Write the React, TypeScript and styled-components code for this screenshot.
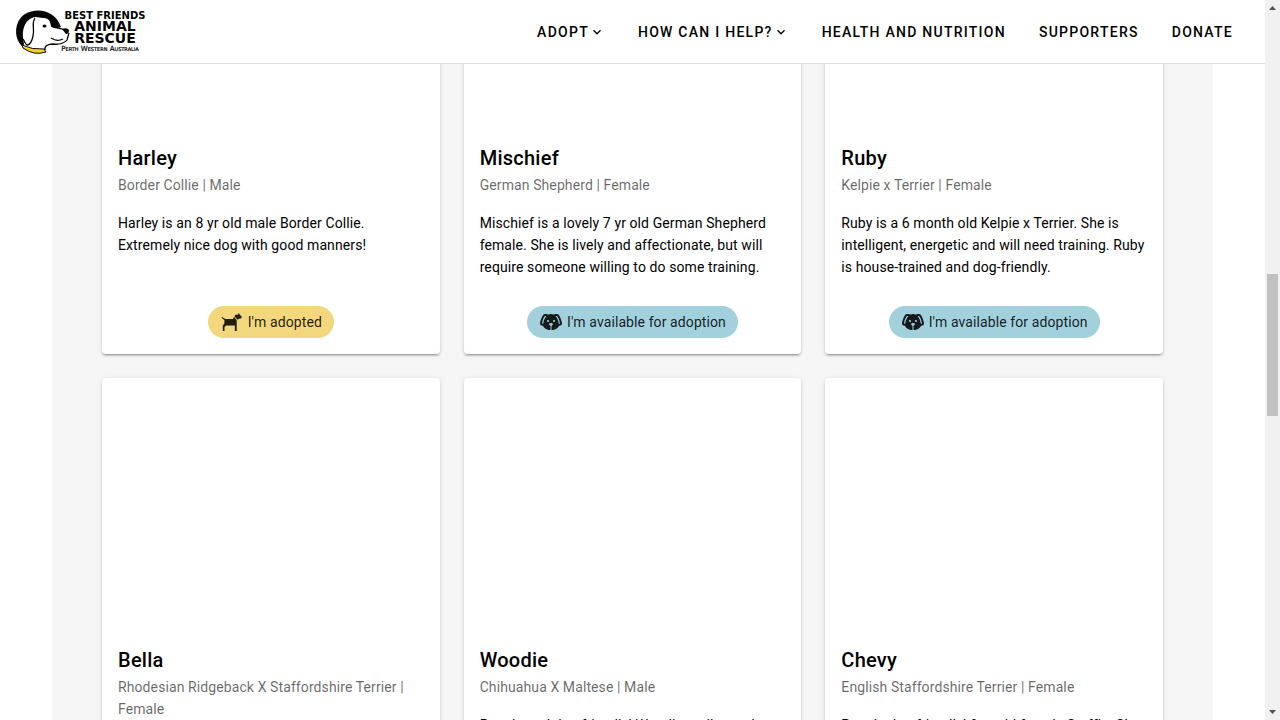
import React from "react";
import styled, { createGlobalStyle } from "styled-components";

const GlobalStyle = createGlobalStyle`
  *, *::before, *::after { box-sizing: border-box; }
  body { margin: 0; background: #fff; color: #000; font-family: Roboto, sans-serif; font-size: 14px; line-height: 22px; overflow: hidden; }
  h2, p { margin: 0; }
`;

const Shell = styled.div`
  display: flex;
  height: 100vh;
`;

const Site = styled.div`
  flex: 1;
  min-width: 0;
  display: flex;
  flex-direction: column;
`;

const Header = styled.header`
  flex: none;
  display: flex;
  align-items: center;
  justify-content: space-between;
  height: 64px;
  padding: 0 16px;
  border-bottom: 1px solid #e0e0e0;
  background: #fff;
`;

const LogoLink = styled.a`
  display: block;
  height: 46px;
  color: #000;
`;

const Nav = styled.nav`
  display: flex;
  gap: 1px;
`;

const navItem = `
  display: inline-flex;
  align-items: center;
  height: 36px;
  padding: 0 16px;
  border: 0;
  background: none;
  color: #000;
  font: 500 14px Roboto, sans-serif;
  letter-spacing: 0.09em;
  text-transform: uppercase;
  text-decoration: none;
  white-space: nowrap;
`;
const NavLink = styled.a`${navItem}`;
const NavButton = styled.button`${navItem}`;

const Main = styled.main`
  flex: 1;
  min-height: 0;
  overflow: hidden;
  padding: 0 52px;
`;

const Panel = styled.section`
  max-width: 1161px;
  margin: -188px auto 0;
  padding: 0 50px;
  background: #f6f6f6;
`;

const Grid = styled.div`
  display: grid;
  grid-template-columns: repeat(3, minmax(0, 1fr));
  gap: 24px;
`;

const Card = styled.article`
  display: flex;
  flex-direction: column;
  min-height: 478px;
  border-radius: 4px;
  background: #fff;
  letter-spacing: 0.007em;
  box-shadow: 0 3px 1px -2px rgba(0, 0, 0, 0.2), 0 2px 2px 0 rgba(0, 0, 0, 0.14), 0 1px 5px 0 rgba(0, 0, 0, 0.12);
`;

const Photo = styled.div`
  height: 250px;
`;

const Name = styled.h2`
  padding: 16px 16px 0;
  font-size: 20px;
  font-weight: 500;
  line-height: 32px;
  letter-spacing: 0.0125em;
`;

const Breed = styled.p`
  padding: 0 16px 16px;
  color: rgba(0, 0, 0, 0.6);
`;

const About = styled.p`
  flex: 1;
  padding: 0 16px 16px;
`;

const Actions = styled.div`
  display: flex;
  justify-content: center;
  padding: 0 16px 16px;
`;

const Chip = styled.span<{ $adopted: boolean }>`
  display: inline-flex;
  align-items: center;
  gap: 4px;
  height: 32px;
  padding: 0 12px;
  border-radius: 16px;
  background: ${(p) => (p.$adopted ? "#f2d77c" : "#a2d0dd")};
  color: rgba(0, 0, 0, 0.87);
  white-space: nowrap;
`;

const Scrollbar = styled.div`
  flex: none;
  display: flex;
  flex-direction: column;
  align-items: center;
  width: 15px;
  background: #f1f1f1;
`;
const Arrow = styled.svg`
  flex: none;
  width: 15px;
  height: 15px;
  fill: #505050;
`;
const Track = styled.div`
  flex: 1;
  width: 11px;
  padding-top: 259px;
`;
const Thumb = styled.div`
  height: 142px;
  background: #c1c1c1;
`;

const DogFace = () => (
  <svg width="24" height="24" viewBox="0 0 24 24" fill="currentColor" aria-hidden="true">
    <path d="M18,4C16.29,4 15.25,4.33 14.65,4.61C13.88,4.23 13,4 12,4C11,4 10.12,4.23 9.35,4.61C8.75,4.33 7.71,4 6,4C3,4 1,12 1,14C1,14.83 2.32,15.59 4.14,15.9C4.78,18.14 7.8,19.85 11.5,20V15.72C10.91,15.35 10,14.68 10,14C10,13 12,13 12,13C12,13 14,13 14,14C14,14.68 13.09,15.35 12.5,15.72V20C16.2,19.85 19.22,18.14 19.86,15.9C21.68,15.59 23,14.83 23,14C23,12 21,4 18,4M4.15,13.87C3.65,13.75 3.26,13.61 3,13.5C3.25,10.73 5.2,6.4 6.05,6C6.59,6 7,6.06 7.37,6.11C5.27,8.42 4.44,12.04 4.15,13.87M9,12A1,1 0 0,1 8,11C8,10.46 8.45,10 9,10A1,1 0 0,1 10,11C10,11.56 9.55,12 9,12M15,12A1,1 0 0,1 14,11C14,10.46 14.45,10 15,10A1,1 0 0,1 16,11C16,11.56 15.55,12 15,12M19.85,13.87C19.56,12.04 18.73,8.42 16.63,6.11C17,6.06 17.41,6 17.95,6C18.8,6.4 20.75,10.73 21,13.5C20.75,13.61 20.36,13.75 19.85,13.87Z" />
  </svg>
);

const DogSide = () => (
  <svg width="24" height="24" viewBox="0 0 24 24" fill="currentColor" aria-hidden="true">
    <path d="M18.6 3 19.6 4.5 22 7 20.4 8.7H18.6L17.300 9.8 14.600 6.300 15.200 4.800H17.8ZM14 6.700 16.700 10.200V21H14.800V15.500H6.2L4.500 17V21H2.8V15.500L4.400 13.500V10L1.7 8V7.2H2.6L5.300 9H13Z" />
  </svg>
);

const Chevron = () => (
  <svg width="16" height="16" viewBox="0 0 24 24" fill="currentColor" aria-hidden="true">
    <path d="M7.41 8.58 12 13.17l4.59-4.59L18 10l-6 6-6-6z" />
  </svg>
);

const Tagline = styled.text`
  font-size: 7px;
  font-variant: small-caps;
  font-weight: 400;
  stroke: #000;
  stroke-width: 0.2;
`;

const Logo = () => (
  <svg width="130" height="46" viewBox="0 0 130 46" role="img" aria-label="Best Friends Animal Rescue, Perth Western Australia">
    <path d="M7 38C-3 30 -2 12 9 5C21-2 39 1 45 18C41 20 38 19 35 17C34 11 32 9 27 9C23 9 20 7 16 9C8 12 5 23 8 35Z" fill="#050505" />
    <path d="M6 36Q16 41 28 40L30 43Q18 47 7 39Z" fill="#f5d219" stroke="#050505" strokeWidth="1" />
    <path d="M19 9C15 15 19 19 17 27C16 32 14 36 11 36C9 35 9 33 7 30M35 17C39 20 46 18 50 22M29 41C28 37 32 35 37 35C43 36 49 34 51 31L53 24M35 29Q41 33 47 30" fill="none" stroke="#050505" strokeWidth="1.3" />
    <ellipse cx="28.500" cy="17" rx="2" ry="1.500" />
    <path d="M46 20Q51 18 53 21Q53 25 50 25Z" />
    <g fontFamily="DejaVu Sans, sans-serif" fontWeight="700" textAnchor="middle">
      <text x="89" y="10" fontSize="10">BEST FRIENDS</text>
      <text x="89" y="22" fontSize="14">ANIMAL</text>
      <text x="89" y="34" fontSize="14">RESCUE</text>
      <Tagline x="84" y="42">Perth Western Australia</Tagline>
    </g>
  </svg>
);

type Dog = { name: string; breed: string; about: string; adopted: boolean };

const dogs: Dog[] = [
  { name: "Harley", breed: "Border Collie | Male", about: "Harley is an 8 yr old male Border Collie. Extremely nice dog with good manners!", adopted: true },
  { name: "Mischief", breed: "German Shepherd | Female", about: "Mischief is a lovely 7 yr old German Shepherd female. She is lively and affectionate, but will require someone willing to do some training.", adopted: false },
  { name: "Ruby", breed: "Kelpie x Terrier | Female", about: "Ruby is a 6 month old Kelpie x Terrier. She is intelligent, energetic and will need training. Ruby is house-trained and dog-friendly.", adopted: false },
  { name: "Bella", breed: "Rhodesian Ridgeback X Staffordshire Terrier | Female", about: "", adopted: false },
  { name: "Woodie", breed: "Chihuahua X Maltese | Male", about: "People and dog friendly! Woodie really needs", adopted: false },
  { name: "Chevy", breed: "English Staffordshire Terrier | Female", about: "People dog friendly! 8 yr old female Staffie. She", adopted: false },
];

const DogCard = ({ dog }: { dog: Dog }) => (
  <Card>
    <Photo />
    <Name>{dog.name}</Name>
    <Breed>{dog.breed}</Breed>
    <About>{dog.about}</About>
    <Actions>
      <Chip $adopted={dog.adopted}>
        {dog.adopted ? <DogSide /> : <DogFace />}
        {dog.adopted ? "I'm adopted" : "I'm available for adoption"}
      </Chip>
    </Actions>
  </Card>
);

export default function App() {
  return (
    <>
      <GlobalStyle />
      <Shell>
        <Site>
          <Header>
            <LogoLink href="#"><Logo /></LogoLink>
            <Nav>
              <NavButton type="button">Adopt<Chevron /></NavButton>
              <NavButton type="button">How can I help?<Chevron /></NavButton>
              <NavLink href="#">Health and Nutrition</NavLink>
              <NavLink href="#">Supporters</NavLink>
              <NavLink href="#">Donate</NavLink>
            </Nav>
          </Header>
          <Main>
            <Panel>
              <Grid>
                {dogs.map((dog) => <DogCard key={dog.name} dog={dog} />)}
              </Grid>
            </Panel>
          </Main>
        </Site>
        <Scrollbar aria-hidden="true">
          <Arrow viewBox="0 0 15 15"><path d="M4 10h7L7.500 6z" /></Arrow>
          <Track><Thumb /></Track>
          <Arrow viewBox="0 0 15 15"><path d="M4 5h7L7.500 9z" /></Arrow>
        </Scrollbar>
      </Shell>
    </>
  );
}
